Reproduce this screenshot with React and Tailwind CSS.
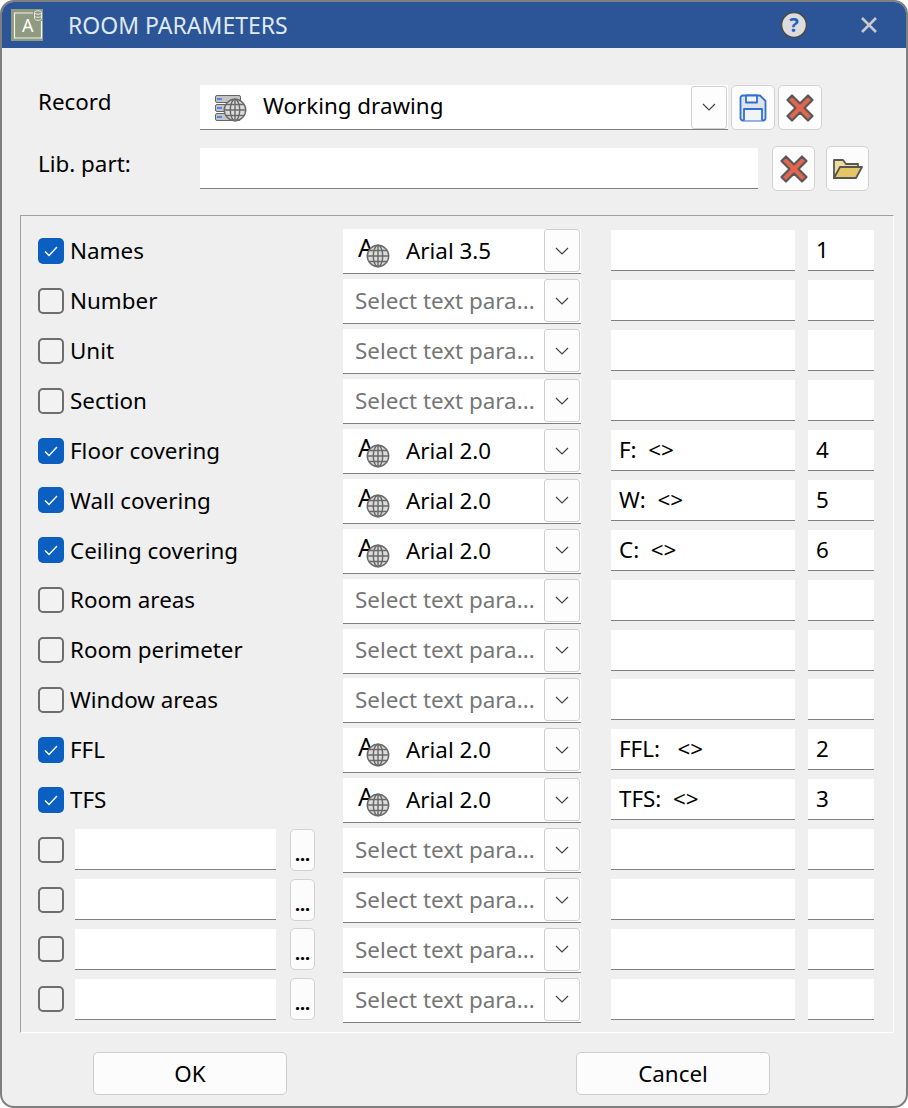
const font = { fontFamily: '"Noto Sans", sans-serif' };

const rows = [
  { label: 'Names', on: true, font: 'Arial 3.5', text: '', num: '1' },
  { label: 'Number' },
  { label: 'Unit' },
  { label: 'Section' },
  { label: 'Floor covering', on: true, font: 'Arial 2.0', text: 'F:  <>', num: '4' },
  { label: 'Wall covering', on: true, font: 'Arial 2.0', text: 'W:  <>', num: '5' },
  { label: 'Ceiling covering', on: true, font: 'Arial 2.0', text: 'C:  <>', num: '6' },
  { label: 'Room areas' },
  { label: 'Room perimeter' },
  { label: 'Window areas' },
  { label: 'FFL', on: true, font: 'Arial 2.0', text: 'FFL:   <>', num: '2' },
  { label: 'TFS', on: true, font: 'Arial 2.0', text: 'TFS:  <>', num: '3' },
  { custom: true },
  { custom: true },
  { custom: true },
  { custom: true },
];

function Globe({ size = 28, stroke = '#6a6a6a' }) {
  return (
    <svg width={size} height={size} viewBox="0 0 28 28" fill="#dcdcdc" stroke={stroke} strokeWidth="1.7">
      <circle cx="14" cy="14" r="12.5" />
      <ellipse cx="14" cy="14" rx="5.5" ry="12.5" fill="none" />
      <path d="M14 1.5v25M1.5 14h25M3.5 7.5h21M3.5 20.5h21" fill="none" />
    </svg>
  );
}

function RedX() {
  return (
    <svg width="30" height="30" viewBox="0 0 30 30">
      <path
        d="M7 2.5 15 10.5 23 2.5 27.5 7 19.5 15 27.5 23 23 27.5 15 19.5 7 27.5 2.5 23 10.5 15 2.5 7Z"
        fill="#e4654f"
        stroke="#585858"
        strokeWidth="2.2"
        strokeLinejoin="round"
      />
    </svg>
  );
}

function Chevron() {
  return (
    <svg width="14" height="8" viewBox="0 0 14 8" fill="none" stroke="#444" strokeWidth="1.2">
      <path d="M1 1l6 6 6-6" />
    </svg>
  );
}

function ChevronButton({ className }) {
  return (
    <div className={`flex h-[43px] w-[36px] shrink-0 items-center justify-center rounded-[3px] border border-[#d0d0d0] bg-[#fdfdfd] ${className}`}>
      <Chevron />
    </div>
  );
}

function IconButton({ className, children }) {
  return (
    <button className={`flex h-[45px] shrink-0 items-center justify-center rounded-[5px] border border-[#d2d2d2] bg-[#fcfcfc] ${className}`}>
      {children}
    </button>
  );
}

function Check({ on }) {
  if (on) {
    return (
      <div className="flex h-[26px] w-[26px] shrink-0 items-center justify-center rounded-[5px] bg-[#0a5fc0]">
        <svg width="16" height="12" viewBox="0 0 16 12" fill="none" stroke="#fff" strokeWidth="1.4">
          <path d="M2 6.5 6 10.5 14 2" />
        </svg>
      </div>
    );
  }
  return <div className="h-[26px] w-[26px] shrink-0 rounded-[5px] border-2 border-[#6e6e6e] bg-[#f2f2f2]" />;
}

function Field({ className, children }) {
  return (
    <div className={`flex h-[41px] shrink-0 items-center whitespace-pre border-b border-b-[#808080] bg-white pl-2 text-[22.4px] leading-none text-black ${className}`}>
      {children}
    </div>
  );
}

function FontCombo({ value }) {
  return (
    <div className="mt-[2px] flex h-[45px] w-[238px] shrink-0 items-center border-b border-b-[#808080] bg-white pr-[1px]">
      {value ? (
        <>
          <div className="relative ml-[15px] h-[30px] w-[48px] shrink-0">
            <span className="absolute left-0 top-[-4px] text-[25px] leading-[30px] text-black">A</span>
            <div className="absolute left-[8px] top-[8px]">
              <Globe size={24} />
            </div>
          </div>
          <span className="flex-1 text-[22.4px] leading-none text-black">{value}</span>
        </>
      ) : (
        <span className="ml-[12px] flex-1 whitespace-nowrap text-[22.4px] leading-none text-[#767676]">Select text para...</span>
      )}
      <ChevronButton className="mb-[1px]" />
    </div>
  );
}

function Row({ row }) {
  return (
    <div className="flex h-[49.9px] items-center">
      <div className="flex w-[305px] shrink-0 items-center">
        <Check on={row.on} />
        {row.custom ? (
          <>
            <div className="ml-[11px] h-[41px] w-[201px] border-b border-b-[#808080] bg-white" />
            <button className="ml-[14px] flex h-[42px] w-[25px] items-end justify-center rounded-[5px] border border-[#d2d2d2] bg-[#fcfcfc] pb-[7px] text-[18px] font-bold leading-none text-black">
              ...
            </button>
          </>
        ) : (
          <span className="ml-[6px] pt-[1px] text-[22.4px] leading-none text-black">{row.label}</span>
        )}
      </div>
      <FontCombo value={row.font} />
      <Field className="ml-[30px] w-[184px]">{row.text}</Field>
      <Field className="ml-[13px] w-[66px]">{row.num}</Field>
    </div>
  );
}

function ServerRow() {
  return (
    <div className="flex h-[8px] items-center rounded-[2px] border border-[#666] bg-[#c4c4c4] pl-[1px]">
      <div className="h-[2px] w-[5px] bg-[#4f8ae0]" />
    </div>
  );
}

export default function App() {
  return (
    <div className="h-[1108px] w-[908px] bg-white" style={font}>
      <div className="flex h-full flex-col overflow-hidden rounded-[14px] border-2 border-[#7f7f7f] bg-[#efefef]">
        <div className="flex h-[46px] shrink-0 items-center bg-[#2b5597]">
          <svg className="ml-[9px]" width="32" height="32" viewBox="0 0 32 32">
            <rect width="32" height="32" fill="#8f9a80" />
            <path d="M22 4H3.5v25h27V12" fill="none" stroke="#f2f2ea" strokeWidth="1.2" />
            <text x="11" y="23" fontSize="18" fill="#fff">A</text>
            <g fill="none" stroke="#e8e8de" strokeWidth="1">
              <ellipse cx="27" cy="3.5" rx="3.5" ry="1.8" />
              <path d="M23.5 3.5v6c0 1 1.5 1.8 3.5 1.8s3.5-.8 3.5-1.8v-6M23.5 6.5c0 1 1.5 1.8 3.5 1.8s3.5-.8 3.5-1.8" />
            </g>
          </svg>
          <span className="ml-[25px] text-[23px] leading-none text-[#dfe8f3]">ROOM PARAMETERS</span>
          <svg className="ml-auto" width="28" height="28" viewBox="0 0 28 28">
            <circle cx="14" cy="14" r="12.5" fill="#dcdcdc" stroke="#4a4a4a" strokeWidth="1.6" />
            <text x="14" y="21" textAnchor="middle" fontSize="20" fontWeight="700" fill="#1f62c4">?</text>
          </svg>
          <svg className="ml-[52px] mr-[28px]" width="18" height="18" viewBox="0 0 18 18" fill="none" stroke="#c6c9cf" strokeWidth="2.6">
            <path d="M2 2l14 14M16 2 2 16" />
          </svg>
        </div>

        <div className="ml-[18px] mt-[37px] flex h-[45px] shrink-0 items-center">
          <span className="mb-[11px] w-[180px] pl-[18px] text-[22.4px] leading-none text-black">Record</span>
          <div className="flex h-[45px] w-[528px] items-center border-b border-b-[#808080] bg-white pr-[1px]">
            <div className="relative ml-[15px] mt-[3px] h-[28px] w-[32px] shrink-0">
              <div className="flex w-[26px] flex-col gap-[1px]">
                <ServerRow />
                <ServerRow />
                <ServerRow />
              </div>
              <div className="absolute left-[8px] top-[3px]">
                <Globe size={24} />
              </div>
            </div>
            <span className="mb-[2px] ml-[16px] flex-1 text-[22.4px] leading-none text-black">Working drawing</span>
            <ChevronButton className="" />
          </div>
          <IconButton className="ml-[3px] w-[44px]">
            <svg width="28" height="28" viewBox="0 0 28 28" fill="#dfe2e8" stroke="#2f70d0" strokeWidth="1.8" strokeLinejoin="round">
              <path d="M1.5 4a2.5 2.5 0 0 1 2.5-2.5h17l5.5 5.5v17a2.5 2.5 0 0 1-2.5 2.5H4a2.5 2.5 0 0 1-2.5-2.5Z" />
              <path d="M7 1.5h11v7H7ZM5 26.5V15h18v11.5" fill="#f2f3f5" />
            </svg>
          </IconButton>
          <IconButton className="ml-[3px] w-[44px]">
            <RedX />
          </IconButton>
        </div>

        <div className="ml-[18px] mt-[16px] flex h-[45px] shrink-0 items-center">
          <span className="mb-[9px] w-[180px] pl-[18px] text-[22.4px] leading-none text-black">Lib. part:</span>
          <div className="mb-[1px] h-[41px] w-[558px] border-b border-b-[#808080] bg-white" />
          <IconButton className="ml-[14px] h-[43px] w-[43px]">
            <RedX />
          </IconButton>
          <IconButton className="ml-[11px] h-[43px] w-[43px]">
            <svg width="30" height="22" viewBox="0 0 30 22" stroke="#555" strokeWidth="1.8" strokeLinejoin="round">
              <path d="M1 20V2h9l3 4h12v4H8L1 20Z" fill="#f0dc9e" />
              <path d="M1 20 7 9h22l-6 11Z" fill="#e5c667" />
            </svg>
          </IconButton>
        </div>

        <div className="ml-[18px] mt-[24px] w-[874px] shrink-0 border border-b-white border-l-[#a0a0a0] border-r-white border-t-[#a0a0a0] pb-[7.5px] pl-[17px] pt-[10px]">
          {rows.map((row, i) => (
            <Row key={i} row={row} />
          ))}
        </div>

        <div className="ml-[91px] mt-[19px] flex shrink-0">
          <button className="h-[43px] w-[194px] rounded-[5px] border border-[#cdcdcd] bg-[#fcfcfc] pt-[2px] text-[22.4px] leading-none text-black">OK</button>
          <button className="ml-[289px] h-[43px] w-[194px] rounded-[5px] border border-[#cdcdcd] bg-[#fcfcfc] pt-[2px] text-[22.4px] leading-none text-black">Cancel</button>
        </div>
      </div>
    </div>
  );
}
